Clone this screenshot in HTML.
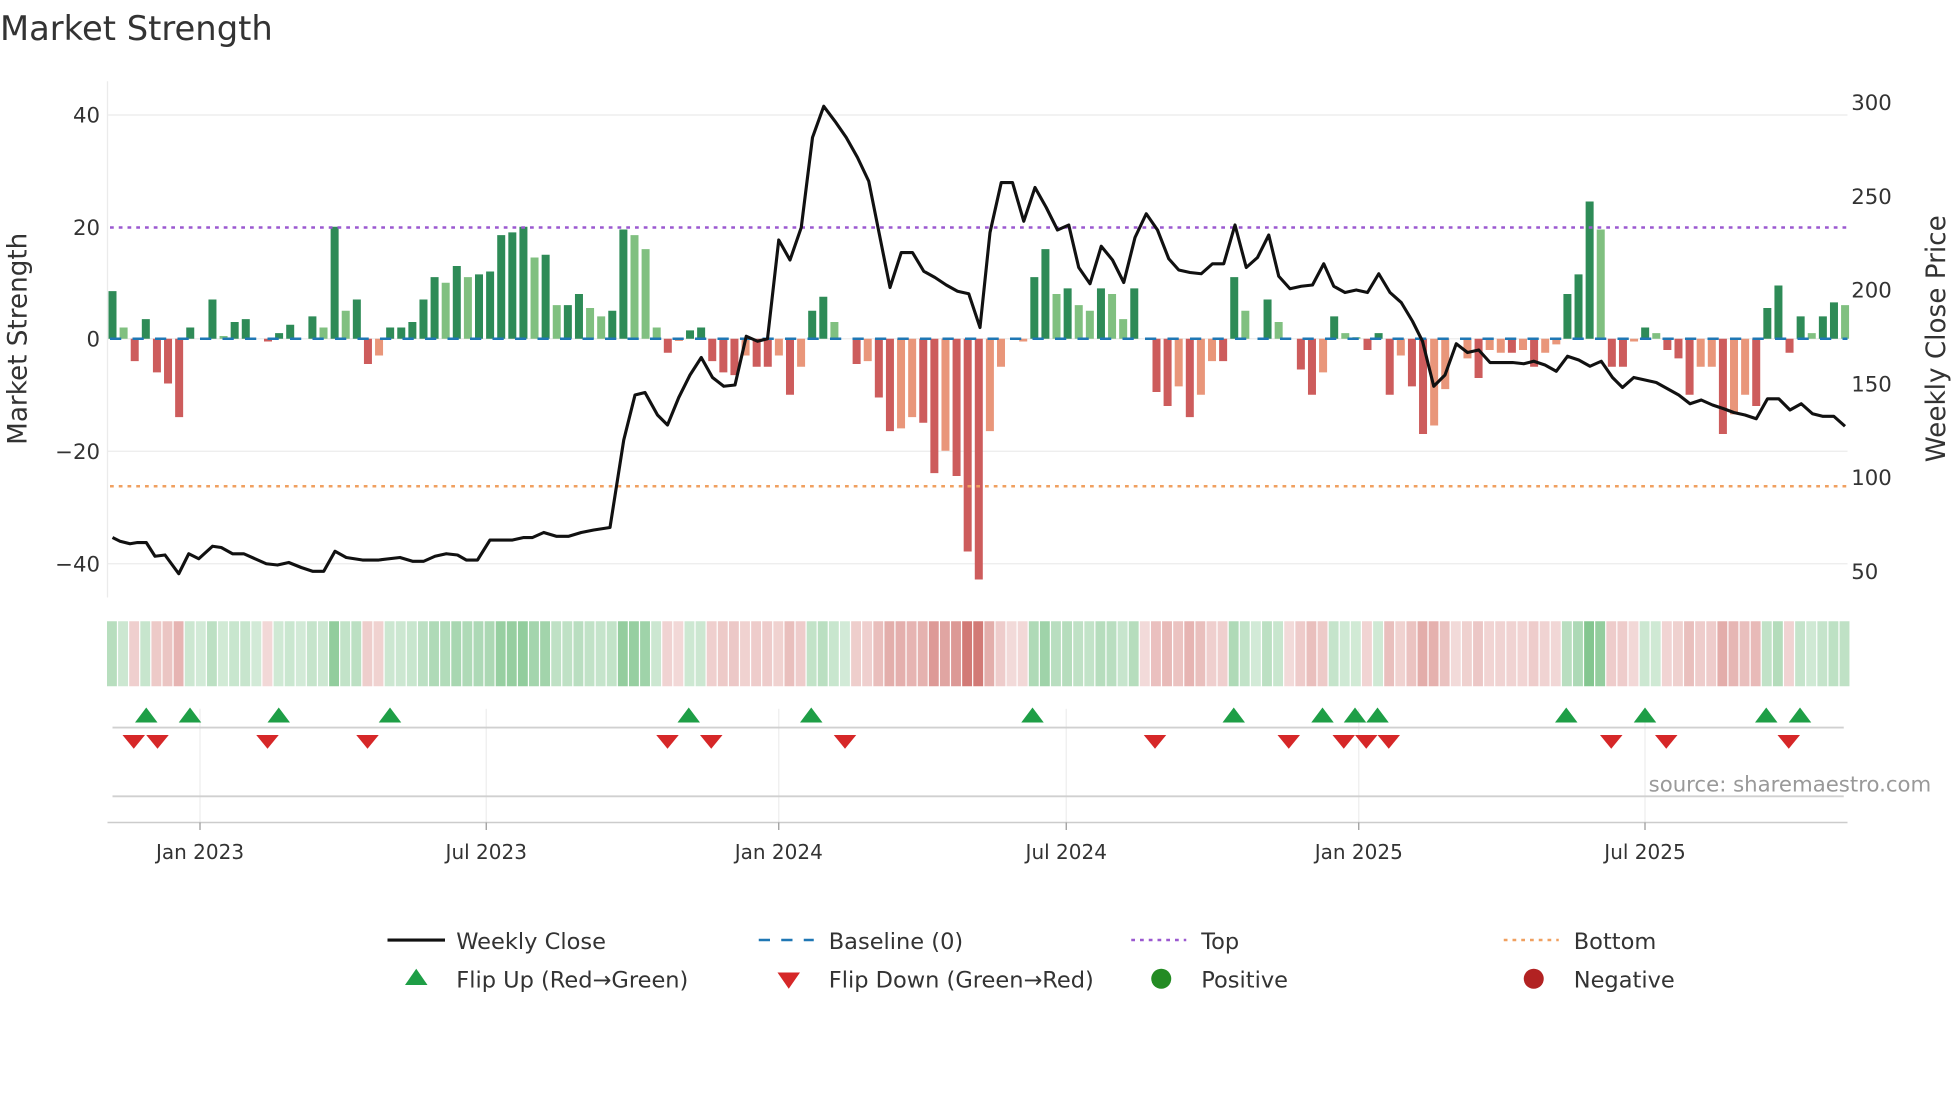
<!DOCTYPE html>
<html><head><meta charset="utf-8"><style>
html,body{margin:0;padding:0;background:#fff;}
svg{display:block;}
text{font-family:"DejaVu Sans","Liberation Sans",sans-serif;fill:#333;}
.d{fill:#2e8b57}.l{fill:#80c080}.r{fill:#cd5c5c}.s{fill:#e9967a}
.G{fill:#5fb56f}.R{fill:#d27a76}
</style></head><body>
<svg width="1960" height="1102" viewBox="0 0 1568 881.6" xmlns="http://www.w3.org/2000/svg">
<text x="0" y="32" font-size="27">Market Strength</text>
<g stroke="#ebebeb" stroke-width="1">
<line x1="86" y1="92" x2="1478" y2="92"/><line x1="86" y1="271" x2="1478" y2="271"/>
<line x1="86" y1="361" x2="1478" y2="361"/><line x1="86" y1="451" x2="1478" y2="451"/>
<line x1="86" y1="65" x2="86" y2="478"/>
</g>
<g font-size="17" text-anchor="end">
<text x="80" y="98">40</text><text x="80" y="188">20</text><text x="80" y="277">0</text>
<text x="80" y="367">−20</text><text x="80" y="457">−40</text>
</g>
<g font-size="17">
<text x="1481" y="88">300</text><text x="1481" y="163">250</text><text x="1481" y="238">200</text>
<text x="1481" y="313">150</text><text x="1481" y="388">100</text><text x="1481" y="463">50</text>
</g>
<text font-size="21" text-anchor="middle" transform="translate(21,271) rotate(-90)">Market Strength</text>
<text font-size="21" text-anchor="middle" transform="translate(1556,271) rotate(-90)">Weekly Close Price</text>

<g>
<g><rect x="86.8" width="6.4" class="d" y="232.9" height="38.1"/><rect x="85.6" y="497" width="7.9" height="52" class="G" fill-opacity=".45"/>
<g transform="translate(8.885)"><rect x="86.8" width="6.4" class="l" y="262" height="9"/><rect x="85.6" y="497" width="7.9" height="52" class="G" fill-opacity=".32"/>
<g transform="translate(8.885)"><rect x="86.8" width="6.4" class="r" y="271" height="17.9"/><rect x="85.6" y="497" width="7.9" height="52" class="R" fill-opacity=".36"/>
<g transform="translate(8.885)"><rect x="86.8" width="6.4" class="d" y="255.3" height="15.7"/><rect x="85.6" y="497" width="7.9" height="52" class="G" fill-opacity=".35"/>
<g transform="translate(8.885)"><rect x="86.8" width="6.4" class="r" y="271" height="26.9"/><rect x="85.6" y="497" width="7.9" height="52" class="R" fill-opacity=".4"/>
<g transform="translate(8.885)"><rect x="86.8" width="6.4" class="r" y="271" height="35.8"/><rect x="85.6" y="497" width="7.9" height="52" class="R" fill-opacity=".44"/>
<g transform="translate(8.885)"><rect x="86.8" width="6.4" class="r" y="271" height="62.7"/><rect x="85.6" y="497" width="7.9" height="52" class="R" fill-opacity=".56"/>
<g transform="translate(8.885)"><rect x="86.8" width="6.4" class="d" y="262" height="9"/><rect x="85.6" y="497" width="7.9" height="52" class="G" fill-opacity=".32"/>
<g transform="translate(8.885)"><rect x="85.6" y="497" width="7.9" height="52" class="G" fill-opacity=".28"/>
<g transform="translate(8.885)"><rect x="86.8" width="6.4" class="d" y="239.6" height="31.4"/><rect x="85.6" y="497" width="7.9" height="52" class="G" fill-opacity=".42"/>
<g transform="translate(8.885)"><rect x="86.8" width="6.4" class="l" y="268.8" height="2.2"/><rect x="85.6" y="497" width="7.9" height="52" class="G" fill-opacity=".29"/>
<g transform="translate(8.885)"><rect x="86.8" width="6.4" class="d" y="257.6" height="13.4"/><rect x="85.6" y="497" width="7.9" height="52" class="G" fill-opacity=".34"/>
<g transform="translate(8.885)"><rect x="86.8" width="6.4" class="d" y="255.3" height="15.7"/><rect x="85.6" y="497" width="7.9" height="52" class="G" fill-opacity=".35"/>
<g transform="translate(8.885)"><rect x="85.6" y="497" width="7.9" height="52" class="G" fill-opacity=".28"/>
<g transform="translate(8.885)"><rect x="86.8" width="6.4" class="r" y="271" height="2.2"/><rect x="85.6" y="497" width="7.9" height="52" class="R" fill-opacity=".29"/>
<g transform="translate(8.885)"><rect x="86.8" width="6.4" class="d" y="266.5" height="4.5"/><rect x="85.6" y="497" width="7.9" height="52" class="G" fill-opacity=".3"/>
<g transform="translate(8.885)"><rect x="86.8" width="6.4" class="d" y="259.8" height="11.2"/><rect x="85.6" y="497" width="7.9" height="52" class="G" fill-opacity=".33"/>
<g transform="translate(8.885)"><rect x="85.6" y="497" width="7.9" height="52" class="G" fill-opacity=".28"/>
<g transform="translate(8.885)"><rect x="86.8" width="6.4" class="d" y="253.1" height="17.9"/><rect x="85.6" y="497" width="7.9" height="52" class="G" fill-opacity=".36"/>
<g transform="translate(8.885)"><rect x="86.8" width="6.4" class="l" y="262" height="9"/><rect x="85.6" y="497" width="7.9" height="52" class="G" fill-opacity=".32"/>
<g transform="translate(8.885)"><rect x="86.8" width="6.4" class="d" y="181.4" height="89.6"/><rect x="85.6" y="497" width="7.9" height="52" class="G" fill-opacity=".68"/>
<g transform="translate(8.885)"><rect x="86.8" width="6.4" class="l" y="248.6" height="22.4"/><rect x="85.6" y="497" width="7.9" height="52" class="G" fill-opacity=".38"/>
<g transform="translate(8.885)"><rect x="86.8" width="6.4" class="d" y="239.6" height="31.4"/><rect x="85.6" y="497" width="7.9" height="52" class="G" fill-opacity=".42"/>
<g transform="translate(8.885)"><rect x="86.8" width="6.4" class="r" y="271" height="20.2"/><rect x="85.6" y="497" width="7.9" height="52" class="R" fill-opacity=".37"/>
<g transform="translate(8.885)"><rect x="86.8" width="6.4" class="s" y="271" height="13.4"/><rect x="85.6" y="497" width="7.9" height="52" class="R" fill-opacity=".34"/>
<g transform="translate(8.885)"><rect x="86.8" width="6.4" class="d" y="262" height="9"/><rect x="85.6" y="497" width="7.9" height="52" class="G" fill-opacity=".32"/>
<g transform="translate(8.885)"><rect x="86.8" width="6.4" class="d" y="262" height="9"/><rect x="85.6" y="497" width="7.9" height="52" class="G" fill-opacity=".32"/>
<g transform="translate(8.885)"><rect x="86.8" width="6.4" class="d" y="257.6" height="13.4"/><rect x="85.6" y="497" width="7.9" height="52" class="G" fill-opacity=".34"/>
<g transform="translate(8.885)"><rect x="86.8" width="6.4" class="d" y="239.6" height="31.4"/><rect x="85.6" y="497" width="7.9" height="52" class="G" fill-opacity=".42"/>
<g transform="translate(8.885)"><rect x="86.8" width="6.4" class="d" y="221.7" height="49.3"/><rect x="85.6" y="497" width="7.9" height="52" class="G" fill-opacity=".5"/>
<g transform="translate(8.885)"><rect x="86.8" width="6.4" class="l" y="226.2" height="44.8"/><rect x="85.6" y="497" width="7.9" height="52" class="G" fill-opacity=".48"/>
<g transform="translate(8.885)"><rect x="86.8" width="6.4" class="d" y="212.8" height="58.2"/><rect x="85.6" y="497" width="7.9" height="52" class="G" fill-opacity=".54"/>
<g transform="translate(8.885)"><rect x="86.8" width="6.4" class="l" y="221.7" height="49.3"/><rect x="85.6" y="497" width="7.9" height="52" class="G" fill-opacity=".5"/>
<g transform="translate(8.885)"><rect x="86.8" width="6.4" class="d" y="219.5" height="51.5"/><rect x="85.6" y="497" width="7.9" height="52" class="G" fill-opacity=".51"/>
<g transform="translate(8.885)"><rect x="86.8" width="6.4" class="d" y="217.2" height="53.8"/><rect x="85.6" y="497" width="7.9" height="52" class="G" fill-opacity=".52"/>
<g transform="translate(8.885)"><rect x="86.8" width="6.4" class="d" y="188.1" height="82.9"/><rect x="85.6" y="497" width="7.9" height="52" class="G" fill-opacity=".65"/>
<g transform="translate(8.885)"><rect x="86.8" width="6.4" class="d" y="185.9" height="85.1"/><rect x="85.6" y="497" width="7.9" height="52" class="G" fill-opacity=".66"/>
<g transform="translate(8.885)"><rect x="86.8" width="6.4" class="d" y="181.4" height="89.6"/><rect x="85.6" y="497" width="7.9" height="52" class="G" fill-opacity=".68"/>
<g transform="translate(8.885)"><rect x="86.8" width="6.4" class="l" y="206" height="65"/><rect x="85.6" y="497" width="7.9" height="52" class="G" fill-opacity=".57"/>
<g transform="translate(8.885)"><rect x="86.8" width="6.4" class="d" y="203.8" height="67.2"/><rect x="85.6" y="497" width="7.9" height="52" class="G" fill-opacity=".58"/>
<g transform="translate(8.885)"><rect x="86.8" width="6.4" class="l" y="244.1" height="26.9"/><rect x="85.6" y="497" width="7.9" height="52" class="G" fill-opacity=".4"/>
<g transform="translate(8.885)"><rect x="86.8" width="6.4" class="d" y="244.1" height="26.9"/><rect x="85.6" y="497" width="7.9" height="52" class="G" fill-opacity=".4"/>
<g transform="translate(8.885)"><rect x="86.8" width="6.4" class="d" y="235.2" height="35.8"/><rect x="85.6" y="497" width="7.9" height="52" class="G" fill-opacity=".44"/>
<g transform="translate(8.885)"><rect x="86.8" width="6.4" class="l" y="246.4" height="24.6"/><rect x="85.6" y="497" width="7.9" height="52" class="G" fill-opacity=".39"/>
<g transform="translate(8.885)"><rect x="86.8" width="6.4" class="l" y="253.1" height="17.9"/><rect x="85.6" y="497" width="7.9" height="52" class="G" fill-opacity=".36"/>
<g transform="translate(8.885)"><rect x="86.8" width="6.4" class="d" y="248.6" height="22.4"/><rect x="85.6" y="497" width="7.9" height="52" class="G" fill-opacity=".38"/>
<g transform="translate(8.885)"><rect x="86.8" width="6.4" class="d" y="183.6" height="87.4"/><rect x="85.6" y="497" width="7.9" height="52" class="G" fill-opacity=".67"/>
<g transform="translate(8.885)"><rect x="86.8" width="6.4" class="l" y="188.1" height="82.9"/><rect x="85.6" y="497" width="7.9" height="52" class="G" fill-opacity=".65"/>
<g transform="translate(8.885)"><rect x="86.8" width="6.4" class="l" y="199.3" height="71.7"/><rect x="85.6" y="497" width="7.9" height="52" class="G" fill-opacity=".6"/>
<g transform="translate(8.885)"><rect x="86.8" width="6.4" class="l" y="262" height="9"/><rect x="85.6" y="497" width="7.9" height="52" class="G" fill-opacity=".32"/>
<g transform="translate(8.885)"><rect x="86.8" width="6.4" class="r" y="271" height="11.2"/><rect x="85.6" y="497" width="7.9" height="52" class="R" fill-opacity=".33"/>
<g transform="translate(8.885)"><rect x="86.8" width="6.4" class="s" y="271" height="1.8"/><rect x="85.6" y="497" width="7.9" height="52" class="R" fill-opacity=".29"/>
<g transform="translate(8.885)"><rect x="86.8" width="6.4" class="d" y="264.3" height="6.7"/><rect x="85.6" y="497" width="7.9" height="52" class="G" fill-opacity=".31"/>
<g transform="translate(8.885)"><rect x="86.8" width="6.4" class="d" y="262" height="9"/><rect x="85.6" y="497" width="7.9" height="52" class="G" fill-opacity=".32"/>
<g transform="translate(8.885)"><rect x="86.8" width="6.4" class="r" y="271" height="17.9"/><rect x="85.6" y="497" width="7.9" height="52" class="R" fill-opacity=".36"/>
<g transform="translate(8.885)"><rect x="86.8" width="6.4" class="r" y="271" height="26.9"/><rect x="85.6" y="497" width="7.9" height="52" class="R" fill-opacity=".4"/>
<g transform="translate(8.885)"><rect x="86.8" width="6.4" class="r" y="271" height="29.1"/><rect x="85.6" y="497" width="7.9" height="52" class="R" fill-opacity=".41"/>
<g transform="translate(8.885)"><rect x="86.8" width="6.4" class="s" y="271" height="13.4"/><rect x="85.6" y="497" width="7.9" height="52" class="R" fill-opacity=".34"/>
<g transform="translate(8.885)"><rect x="86.8" width="6.4" class="r" y="271" height="22.4"/><rect x="85.6" y="497" width="7.9" height="52" class="R" fill-opacity=".38"/>
<g transform="translate(8.885)"><rect x="86.8" width="6.4" class="r" y="271" height="22.4"/><rect x="85.6" y="497" width="7.9" height="52" class="R" fill-opacity=".38"/>
<g transform="translate(8.885)"><rect x="86.8" width="6.4" class="s" y="271" height="13.4"/><rect x="85.6" y="497" width="7.9" height="52" class="R" fill-opacity=".34"/>
<g transform="translate(8.885)"><rect x="86.8" width="6.4" class="r" y="271" height="44.8"/><rect x="85.6" y="497" width="7.9" height="52" class="R" fill-opacity=".48"/>
<g transform="translate(8.885)"><rect x="86.8" width="6.4" class="s" y="271" height="22.4"/><rect x="85.6" y="497" width="7.9" height="52" class="R" fill-opacity=".38"/>
<g transform="translate(8.885)"><rect x="86.8" width="6.4" class="d" y="248.6" height="22.4"/><rect x="85.6" y="497" width="7.9" height="52" class="G" fill-opacity=".38"/>
<g transform="translate(8.885)"><rect x="86.8" width="6.4" class="d" y="237.4" height="33.6"/><rect x="85.6" y="497" width="7.9" height="52" class="G" fill-opacity=".43"/>
<g transform="translate(8.885)"><rect x="86.8" width="6.4" class="l" y="257.6" height="13.4"/><rect x="85.6" y="497" width="7.9" height="52" class="G" fill-opacity=".34"/>
<g transform="translate(8.885)"><rect x="85.6" y="497" width="7.9" height="52" class="G" fill-opacity=".28"/>
<g transform="translate(8.885)"><rect x="86.8" width="6.4" class="r" y="271" height="20.2"/><rect x="85.6" y="497" width="7.9" height="52" class="R" fill-opacity=".37"/>
<g transform="translate(8.885)"><rect x="86.8" width="6.4" class="s" y="271" height="17.9"/><rect x="85.6" y="497" width="7.9" height="52" class="R" fill-opacity=".36"/>
<g transform="translate(8.885)"><rect x="86.8" width="6.4" class="r" y="271" height="47"/><rect x="85.6" y="497" width="7.9" height="52" class="R" fill-opacity=".49"/>
<g transform="translate(8.885)"><rect x="86.8" width="6.4" class="r" y="271" height="73.9"/><rect x="85.6" y="497" width="7.9" height="52" class="R" fill-opacity=".61"/>
<g transform="translate(8.885)"><rect x="86.8" width="6.4" class="s" y="271" height="71.7"/><rect x="85.6" y="497" width="7.9" height="52" class="R" fill-opacity=".6"/>
<g transform="translate(8.885)"><rect x="86.8" width="6.4" class="s" y="271" height="62.7"/><rect x="85.6" y="497" width="7.9" height="52" class="R" fill-opacity=".56"/>
<g transform="translate(8.885)"><rect x="86.8" width="6.4" class="r" y="271" height="67.2"/><rect x="85.6" y="497" width="7.9" height="52" class="R" fill-opacity=".58"/>
<g transform="translate(8.885)"><rect x="86.8" width="6.4" class="r" y="271" height="107.5"/><rect x="85.6" y="497" width="7.9" height="52" class="R" fill-opacity=".76"/>
<g transform="translate(8.885)"><rect x="86.8" width="6.4" class="s" y="271" height="89.6"/><rect x="85.6" y="497" width="7.9" height="52" class="R" fill-opacity=".68"/>
<g transform="translate(8.885)"><rect x="86.8" width="6.4" class="r" y="271" height="109.8"/><rect x="85.6" y="497" width="7.9" height="52" class="R" fill-opacity=".77"/>
<g transform="translate(8.885)"><rect x="86.8" width="6.4" class="r" y="271" height="170.2"/><rect x="85.6" y="497" width="7.9" height="52" class="R" fill-opacity="1"/>
<g transform="translate(8.885)"><rect x="86.8" width="6.4" class="r" y="271" height="192.6"/><rect x="85.6" y="497" width="7.9" height="52" class="R" fill-opacity="1"/>
<g transform="translate(8.885)"><rect x="86.8" width="6.4" class="s" y="271" height="73.9"/><rect x="85.6" y="497" width="7.9" height="52" class="R" fill-opacity=".61"/>
<g transform="translate(8.885)"><rect x="86.8" width="6.4" class="s" y="271" height="22.4"/><rect x="85.6" y="497" width="7.9" height="52" class="R" fill-opacity=".38"/>
<g transform="translate(8.885)"><rect x="85.6" y="497" width="7.9" height="52" class="R" fill-opacity=".28"/>
<g transform="translate(8.885)"><rect x="86.8" width="6.4" class="s" y="271" height="2.2"/><rect x="85.6" y="497" width="7.9" height="52" class="R" fill-opacity=".29"/>
<g transform="translate(8.885)"><rect x="86.8" width="6.4" class="d" y="221.7" height="49.3"/><rect x="85.6" y="497" width="7.9" height="52" class="G" fill-opacity=".5"/>
<g transform="translate(8.885)"><rect x="86.8" width="6.4" class="d" y="199.3" height="71.7"/><rect x="85.6" y="497" width="7.9" height="52" class="G" fill-opacity=".6"/>
<g transform="translate(8.885)"><rect x="86.8" width="6.4" class="l" y="235.2" height="35.8"/><rect x="85.6" y="497" width="7.9" height="52" class="G" fill-opacity=".44"/>
<g transform="translate(8.885)"><rect x="86.8" width="6.4" class="d" y="230.7" height="40.3"/><rect x="85.6" y="497" width="7.9" height="52" class="G" fill-opacity=".46"/>
<g transform="translate(8.885)"><rect x="86.8" width="6.4" class="l" y="244.1" height="26.9"/><rect x="85.6" y="497" width="7.9" height="52" class="G" fill-opacity=".4"/>
<g transform="translate(8.885)"><rect x="86.8" width="6.4" class="l" y="248.6" height="22.4"/><rect x="85.6" y="497" width="7.9" height="52" class="G" fill-opacity=".38"/>
<g transform="translate(8.885)"><rect x="86.8" width="6.4" class="d" y="230.7" height="40.3"/><rect x="85.6" y="497" width="7.9" height="52" class="G" fill-opacity=".46"/>
<g transform="translate(8.885)"><rect x="86.8" width="6.4" class="l" y="235.2" height="35.8"/><rect x="85.6" y="497" width="7.9" height="52" class="G" fill-opacity=".44"/>
<g transform="translate(8.885)"><rect x="86.8" width="6.4" class="l" y="255.3" height="15.7"/><rect x="85.6" y="497" width="7.9" height="52" class="G" fill-opacity=".35"/>
<g transform="translate(8.885)"><rect x="86.8" width="6.4" class="d" y="230.7" height="40.3"/><rect x="85.6" y="497" width="7.9" height="52" class="G" fill-opacity=".46"/>
<g transform="translate(8.885)"><rect x="85.6" y="497" width="7.9" height="52" class="R" fill-opacity=".28"/>
<g transform="translate(8.885)"><rect x="86.8" width="6.4" class="r" y="271" height="42.6"/><rect x="85.6" y="497" width="7.9" height="52" class="R" fill-opacity=".47"/>
<g transform="translate(8.885)"><rect x="86.8" width="6.4" class="r" y="271" height="53.8"/><rect x="85.6" y="497" width="7.9" height="52" class="R" fill-opacity=".52"/>
<g transform="translate(8.885)"><rect x="86.8" width="6.4" class="s" y="271" height="38.1"/><rect x="85.6" y="497" width="7.9" height="52" class="R" fill-opacity=".45"/>
<g transform="translate(8.885)"><rect x="86.8" width="6.4" class="r" y="271" height="62.7"/><rect x="85.6" y="497" width="7.9" height="52" class="R" fill-opacity=".56"/>
<g transform="translate(8.885)"><rect x="86.8" width="6.4" class="s" y="271" height="44.8"/><rect x="85.6" y="497" width="7.9" height="52" class="R" fill-opacity=".48"/>
<g transform="translate(8.885)"><rect x="86.8" width="6.4" class="s" y="271" height="17.9"/><rect x="85.6" y="497" width="7.9" height="52" class="R" fill-opacity=".36"/>
<g transform="translate(8.885)"><rect x="86.8" width="6.4" class="r" y="271" height="17.9"/><rect x="85.6" y="497" width="7.9" height="52" class="R" fill-opacity=".36"/>
<g transform="translate(8.885)"><rect x="86.8" width="6.4" class="d" y="221.7" height="49.3"/><rect x="85.6" y="497" width="7.9" height="52" class="G" fill-opacity=".5"/>
<g transform="translate(8.885)"><rect x="86.8" width="6.4" class="l" y="248.6" height="22.4"/><rect x="85.6" y="497" width="7.9" height="52" class="G" fill-opacity=".38"/>
<g transform="translate(8.885)"><rect x="85.6" y="497" width="7.9" height="52" class="G" fill-opacity=".28"/>
<g transform="translate(8.885)"><rect x="86.8" width="6.4" class="d" y="239.6" height="31.4"/><rect x="85.6" y="497" width="7.9" height="52" class="G" fill-opacity=".42"/>
<g transform="translate(8.885)"><rect x="86.8" width="6.4" class="l" y="257.6" height="13.4"/><rect x="85.6" y="497" width="7.9" height="52" class="G" fill-opacity=".34"/>
<g transform="translate(8.885)"><rect x="85.6" y="497" width="7.9" height="52" class="R" fill-opacity=".28"/>
<g transform="translate(8.885)"><rect x="86.8" width="6.4" class="r" y="271" height="24.6"/><rect x="85.6" y="497" width="7.9" height="52" class="R" fill-opacity=".39"/>
<g transform="translate(8.885)"><rect x="86.8" width="6.4" class="r" y="271" height="44.8"/><rect x="85.6" y="497" width="7.9" height="52" class="R" fill-opacity=".48"/>
<g transform="translate(8.885)"><rect x="86.8" width="6.4" class="s" y="271" height="26.9"/><rect x="85.6" y="497" width="7.9" height="52" class="R" fill-opacity=".4"/>
<g transform="translate(8.885)"><rect x="86.8" width="6.4" class="d" y="253.1" height="17.9"/><rect x="85.6" y="497" width="7.9" height="52" class="G" fill-opacity=".36"/>
<g transform="translate(8.885)"><rect x="86.8" width="6.4" class="l" y="266.5" height="4.5"/><rect x="85.6" y="497" width="7.9" height="52" class="G" fill-opacity=".3"/>
<g transform="translate(8.885)"><rect x="86.8" width="6.4" class="l" y="269.7" height="1.3"/><rect x="85.6" y="497" width="7.9" height="52" class="G" fill-opacity=".29"/>
<g transform="translate(8.885)"><rect x="86.8" width="6.4" class="r" y="271" height="9"/><rect x="85.6" y="497" width="7.9" height="52" class="R" fill-opacity=".32"/>
<g transform="translate(8.885)"><rect x="86.8" width="6.4" class="d" y="266.5" height="4.5"/><rect x="85.6" y="497" width="7.9" height="52" class="G" fill-opacity=".3"/>
<g transform="translate(8.885)"><rect x="86.8" width="6.4" class="r" y="271" height="44.8"/><rect x="85.6" y="497" width="7.9" height="52" class="R" fill-opacity=".48"/>
<g transform="translate(8.885)"><rect x="86.8" width="6.4" class="s" y="271" height="13.4"/><rect x="85.6" y="497" width="7.9" height="52" class="R" fill-opacity=".34"/>
<g transform="translate(8.885)"><rect x="86.8" width="6.4" class="r" y="271" height="38.1"/><rect x="85.6" y="497" width="7.9" height="52" class="R" fill-opacity=".45"/>
<g transform="translate(8.885)"><rect x="86.8" width="6.4" class="r" y="271" height="76.2"/><rect x="85.6" y="497" width="7.9" height="52" class="R" fill-opacity=".62"/>
<g transform="translate(8.885)"><rect x="86.8" width="6.4" class="s" y="271" height="69.4"/><rect x="85.6" y="497" width="7.9" height="52" class="R" fill-opacity=".59"/>
<g transform="translate(8.885)"><rect x="86.8" width="6.4" class="s" y="271" height="40.3"/><rect x="85.6" y="497" width="7.9" height="52" class="R" fill-opacity=".46"/>
<g transform="translate(8.885)"><rect x="85.6" y="497" width="7.9" height="52" class="R" fill-opacity=".28"/>
<g transform="translate(8.885)"><rect x="86.8" width="6.4" class="s" y="271" height="15.7"/><rect x="85.6" y="497" width="7.9" height="52" class="R" fill-opacity=".35"/>
<g transform="translate(8.885)"><rect x="86.8" width="6.4" class="r" y="271" height="31.4"/><rect x="85.6" y="497" width="7.9" height="52" class="R" fill-opacity=".42"/>
<g transform="translate(8.885)"><rect x="86.8" width="6.4" class="s" y="271" height="9"/><rect x="85.6" y="497" width="7.9" height="52" class="R" fill-opacity=".32"/>
<g transform="translate(8.885)"><rect x="86.8" width="6.4" class="s" y="271" height="11.2"/><rect x="85.6" y="497" width="7.9" height="52" class="R" fill-opacity=".33"/>
<g transform="translate(8.885)"><rect x="86.8" width="6.4" class="r" y="271" height="11.2"/><rect x="85.6" y="497" width="7.9" height="52" class="R" fill-opacity=".33"/>
<g transform="translate(8.885)"><rect x="86.8" width="6.4" class="s" y="271" height="9"/><rect x="85.6" y="497" width="7.9" height="52" class="R" fill-opacity=".32"/>
<g transform="translate(8.885)"><rect x="86.8" width="6.4" class="r" y="271" height="22.4"/><rect x="85.6" y="497" width="7.9" height="52" class="R" fill-opacity=".38"/>
<g transform="translate(8.885)"><rect x="86.8" width="6.4" class="s" y="271" height="11.2"/><rect x="85.6" y="497" width="7.9" height="52" class="R" fill-opacity=".33"/>
<g transform="translate(8.885)"><rect x="86.8" width="6.4" class="s" y="271" height="4.5"/><rect x="85.6" y="497" width="7.9" height="52" class="R" fill-opacity=".3"/>
<g transform="translate(8.885)"><rect x="86.8" width="6.4" class="d" y="235.2" height="35.8"/><rect x="85.6" y="497" width="7.9" height="52" class="G" fill-opacity=".44"/>
<g transform="translate(8.885)"><rect x="86.8" width="6.4" class="d" y="219.5" height="51.5"/><rect x="85.6" y="497" width="7.9" height="52" class="G" fill-opacity=".51"/>
<g transform="translate(8.885)"><rect x="86.8" width="6.4" class="d" y="161.2" height="109.8"/><rect x="85.6" y="497" width="7.9" height="52" class="G" fill-opacity=".77"/>
<g transform="translate(8.885)"><rect x="86.8" width="6.4" class="l" y="183.6" height="87.4"/><rect x="85.6" y="497" width="7.9" height="52" class="G" fill-opacity=".67"/>
<g transform="translate(8.885)"><rect x="86.8" width="6.4" class="r" y="271" height="22.4"/><rect x="85.6" y="497" width="7.9" height="52" class="R" fill-opacity=".38"/>
<g transform="translate(8.885)"><rect x="86.8" width="6.4" class="r" y="271" height="22.4"/><rect x="85.6" y="497" width="7.9" height="52" class="R" fill-opacity=".38"/>
<g transform="translate(8.885)"><rect x="86.8" width="6.4" class="s" y="271" height="2.2"/><rect x="85.6" y="497" width="7.9" height="52" class="R" fill-opacity=".29"/>
<g transform="translate(8.885)"><rect x="86.8" width="6.4" class="d" y="262" height="9"/><rect x="85.6" y="497" width="7.9" height="52" class="G" fill-opacity=".32"/>
<g transform="translate(8.885)"><rect x="86.8" width="6.4" class="l" y="266.5" height="4.5"/><rect x="85.6" y="497" width="7.9" height="52" class="G" fill-opacity=".3"/>
<g transform="translate(8.885)"><rect x="86.8" width="6.4" class="r" y="271" height="9"/><rect x="85.6" y="497" width="7.9" height="52" class="R" fill-opacity=".32"/>
<g transform="translate(8.885)"><rect x="86.8" width="6.4" class="r" y="271" height="15.7"/><rect x="85.6" y="497" width="7.9" height="52" class="R" fill-opacity=".35"/>
<g transform="translate(8.885)"><rect x="86.8" width="6.4" class="r" y="271" height="44.8"/><rect x="85.6" y="497" width="7.9" height="52" class="R" fill-opacity=".48"/>
<g transform="translate(8.885)"><rect x="86.8" width="6.4" class="s" y="271" height="22.4"/><rect x="85.6" y="497" width="7.9" height="52" class="R" fill-opacity=".38"/>
<g transform="translate(8.885)"><rect x="86.8" width="6.4" class="s" y="271" height="22.4"/><rect x="85.6" y="497" width="7.9" height="52" class="R" fill-opacity=".38"/>
<g transform="translate(8.885)"><rect x="86.8" width="6.4" class="r" y="271" height="76.2"/><rect x="85.6" y="497" width="7.9" height="52" class="R" fill-opacity=".62"/>
<g transform="translate(8.885)"><rect x="86.8" width="6.4" class="s" y="271" height="60.5"/><rect x="85.6" y="497" width="7.9" height="52" class="R" fill-opacity=".55"/>
<g transform="translate(8.885)"><rect x="86.8" width="6.4" class="s" y="271" height="44.8"/><rect x="85.6" y="497" width="7.9" height="52" class="R" fill-opacity=".48"/>
<g transform="translate(8.885)"><rect x="86.8" width="6.4" class="r" y="271" height="53.8"/><rect x="85.6" y="497" width="7.9" height="52" class="R" fill-opacity=".52"/>
<g transform="translate(8.885)"><rect x="86.8" width="6.4" class="d" y="246.4" height="24.6"/><rect x="85.6" y="497" width="7.9" height="52" class="G" fill-opacity=".39"/>
<g transform="translate(8.885)"><rect x="86.8" width="6.4" class="d" y="228.4" height="42.6"/><rect x="85.6" y="497" width="7.9" height="52" class="G" fill-opacity=".47"/>
<g transform="translate(8.885)"><rect x="86.8" width="6.4" class="r" y="271" height="11.2"/><rect x="85.6" y="497" width="7.9" height="52" class="R" fill-opacity=".33"/>
<g transform="translate(8.885)"><rect x="86.8" width="6.4" class="d" y="253.1" height="17.9"/><rect x="85.6" y="497" width="7.9" height="52" class="G" fill-opacity=".36"/>
<g transform="translate(8.885)"><rect x="86.8" width="6.4" class="l" y="266.5" height="4.5"/><rect x="85.6" y="497" width="7.9" height="52" class="G" fill-opacity=".3"/>
<g transform="translate(8.885)"><rect x="86.8" width="6.4" class="d" y="253.1" height="17.9"/><rect x="85.6" y="497" width="7.9" height="52" class="G" fill-opacity=".36"/>
<g transform="translate(8.885)"><rect x="86.8" width="6.4" class="d" y="241.9" height="29.1"/><rect x="85.6" y="497" width="7.9" height="52" class="G" fill-opacity=".41"/>
<g transform="translate(8.885)"><rect x="86.8" width="6.4" class="l" y="244.1" height="26.9"/><rect x="85.6" y="497" width="7.9" height="52" class="G" fill-opacity=".4"/>
</g></g></g></g></g></g></g></g></g></g></g></g></g></g></g></g></g></g></g></g></g></g></g></g></g></g></g></g></g></g></g></g></g></g></g></g></g></g></g></g></g></g></g></g></g></g></g></g></g></g></g></g></g></g></g></g></g></g></g></g></g></g></g></g></g></g></g></g></g></g></g></g></g></g></g></g></g></g></g></g></g></g></g></g></g></g></g></g></g></g></g></g></g></g></g></g></g></g></g></g></g></g></g></g></g></g></g></g></g></g></g></g></g></g></g></g></g></g></g></g></g></g></g></g></g></g></g></g></g></g></g></g></g></g></g></g></g></g></g></g></g></g></g></g></g></g></g></g></g></g></g></g></g></g></g></g></g></g></g></g>
</g>

<line x1="88" y1="271" x2="1478" y2="271" stroke="#1f77b4" stroke-width="2" stroke-dasharray="9,9"/>
<line x1="88" y1="182" x2="1478" y2="182" stroke="#9b59d0" stroke-width="2" stroke-dasharray="3,4"/>
<line x1="88" y1="389" x2="1478" y2="389" stroke="#f0a060" stroke-width="2" stroke-dasharray="3,4"/>
<polyline fill="none" stroke="#111" stroke-width="2.5" stroke-linejoin="round" points="90,430 96,433 104,435 110,434 117,434 124,445 132,444 143,459 151,443 159,447 170,437 177,438 186,443 195,443 213,451 222,452 231,450 241,454 250,457 259,457 268,441 277,446 290,448 303,448 320,446 330,449 339,449 348,445 357,443 366,444 373,448 382,448 392,432 405,432 410,432 419,430 426,430 435,426 445,429 455,429 465,426 475,424 488,422 499,352 508,316 516,314 526,332 534,340 543,318 552,300 561,286 570,302 579,309 588,308 597,269 606,273 614,271 623,192 632,208 641,182 650,110 659,85 668,97 677,110 686,126 695,145 704,190 712,230 721,202 730,202 739,217 748,222 757,228 766,233 775,235 784,262 792,186 801,146 810,146 819,177 828,150 837,166 846,184 855,180 863,214 872,227 881,197 890,208 899,226 908,190 917,171 926,184 935,207 943,216 952,218 961,219 970,211 979,211 988,180 997,214 1006,206 1015,188 1023,221 1032,231 1041,229 1050,228 1059,211 1067,229 1076,234 1085,232 1094,234 1103,219 1112,234 1121,242 1130,257 1138,273 1147,309 1156,300 1165,275 1174,282 1183,280 1192,290 1201,290 1210,290 1219,291 1227,289 1236,292 1245,297 1254,285 1263,288 1272,293 1281,289 1290,302 1298,310 1307,302 1316,304 1325,306 1334,311 1343,316 1352,323 1361,320 1370,324 1379,327 1387,330 1396,332 1405,335 1414,319 1423,319 1432,328 1441,323 1450,331 1458,333 1467,333 1476,341"/>

<g stroke="#eee" stroke-width="1">
<line x1="160" y1="567" x2="160" y2="658"/><line x1="389" y1="567" x2="389" y2="658"/>
<line x1="623" y1="567" x2="623" y2="658"/><line x1="853" y1="567" x2="853" y2="658"/>
<line x1="1087" y1="567" x2="1087" y2="658"/><line x1="1316" y1="567" x2="1316" y2="658"/>
</g>
<line x1="90" y1="582" x2="1475" y2="582" stroke="#d0d0d0" stroke-width="1.5"/>
<line x1="90" y1="637" x2="1475" y2="637" stroke="#d0d0d0" stroke-width="1.5"/>
<line x1="86" y1="658" x2="1478" y2="658" stroke="#ccc" stroke-width="1.2"/>
<g stroke="#999" stroke-width="1">
<line x1="160" y1="658" x2="160" y2="664"/><line x1="389" y1="658" x2="389" y2="664"/>
<line x1="623" y1="658" x2="623" y2="664"/><line x1="853" y1="658" x2="853" y2="664"/>
<line x1="1087" y1="658" x2="1087" y2="664"/><line x1="1316" y1="658" x2="1316" y2="664"/>
</g>
<g fill="#1e9e46">
<polygon points="108,578 126,578 117,566"/><polygon points="143,578 161,578 152,566"/><polygon points="214,578 232,578 223,566"/><polygon points="303,578 321,578 312,566"/><polygon points="542,578 560,578 551,566"/><polygon points="640,578 658,578 649,566"/><polygon points="817,578 835,578 826,566"/><polygon points="978,578 996,578 987,566"/><polygon points="1049,578 1067,578 1058,566"/><polygon points="1075,578 1093,578 1084,566"/><polygon points="1093,578 1111,578 1102,566"/><polygon points="1244,578 1262,578 1253,566"/><polygon points="1307,578 1325,578 1316,566"/><polygon points="1404,578 1422,578 1413,566"/><polygon points="1431,578 1449,578 1440,566"/>
</g>
<g fill="#d62728">
<polygon points="98,588 116,588 107,599"/><polygon points="117,588 135,588 126,599"/><polygon points="205,588 223,588 214,599"/><polygon points="285,588 303,588 294,599"/><polygon points="525,588 543,588 534,599"/><polygon points="560,588 578,588 569,599"/><polygon points="667,588 685,588 676,599"/><polygon points="915,588 933,588 924,599"/><polygon points="1022,588 1040,588 1031,599"/><polygon points="1066,588 1084,588 1075,599"/><polygon points="1084,588 1102,588 1093,599"/><polygon points="1102,588 1120,588 1111,599"/><polygon points="1280,588 1298,588 1289,599"/><polygon points="1324,588 1342,588 1333,599"/><polygon points="1422,588 1440,588 1431,599"/>
</g>
<text x="1545" y="633" font-size="17" text-anchor="end" style="fill:#999">source: sharemaestro.com</text>
<g font-size="16" text-anchor="middle">
<text x="160" y="687">Jan 2023</text><text x="389" y="687">Jul 2023</text><text x="623" y="687">Jan 2024</text>
<text x="853" y="687">Jul 2024</text><text x="1087" y="687">Jan 2025</text><text x="1316" y="687">Jul 2025</text>
</g>
<g font-size="18">
<line x1="310" y1="752" x2="356" y2="752" stroke="#111" stroke-width="2.5"/>
<text x="365" y="759">Weekly Close</text>
<line x1="607" y1="752" x2="651" y2="752" stroke="#1f77b4" stroke-width="2" stroke-dasharray="9,9"/>
<text x="663" y="759">Baseline (0)</text>
<line x1="905" y1="752" x2="949" y2="752" stroke="#9b59d0" stroke-width="2" stroke-dasharray="3,4"/>
<text x="961" y="759">Top</text>
<line x1="1203" y1="752" x2="1247" y2="752" stroke="#f0a060" stroke-width="2" stroke-dasharray="3,4"/>
<text x="1259" y="759">Bottom</text>
<polygon points="324,788 342,788 333,775" fill="#1e9e46"/>
<text x="365" y="790">Flip Up (Red→Green)</text>
<polygon points="622,778 640,778 631,791" fill="#d62728"/>
<text x="663" y="790">Flip Down (Green→Red)</text>
<circle cx="929" cy="783" r="8" fill="#238b23"/>
<text x="961" y="790">Positive</text>
<circle cx="1227" cy="783" r="8" fill="#b22222"/>
<text x="1259" y="790">Negative</text>
</g>
</svg>
</body></html>
